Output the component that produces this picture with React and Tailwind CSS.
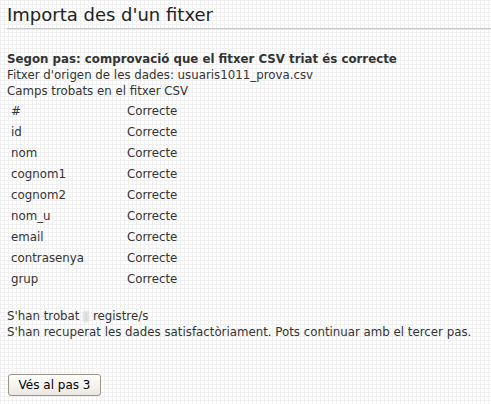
const rows = ["#", "id", "nom", "cognom1", "cognom2", "nom_u", "email", "contrasenya", "grup"];

export default function App() {
  return (
    <div className="min-h-screen w-[491px] h-[404px] overflow-hidden bg-white bg-[linear-gradient(to_right,#f0f0f0_1px,transparent_1px),linear-gradient(to_bottom,#f0f0f0_1px,transparent_1px)] bg-[size:4px_4px] font-['DejaVu_Sans',sans-serif] text-[11.8px] text-[#333]">
      <div className="pl-[7px]">
        <h1 className="pt-[3px] text-[18px] leading-[24px] text-[#222]">Importa des d'un fitxer</h1>
        <div className="mt-[1px] h-[2px] border-t border-[#c8c8c8] bg-[#e4e4e4]" />
        <div className="mt-[21px] leading-[16px]">
          <p className="font-bold">Segon pas: comprovació que el fitxer CSV triat és correcte</p>
          <p>Fitxer d'origen de les dades: usuaris1011_prova.csv</p>
          <p>Camps trobats en el fitxer CSV</p>
        </div>
        <table className="mt-[2px] border-separate border-spacing-0">
          <tbody>
            {rows.map((r) => (
              <tr key={r} className="h-[21px]">
                <td className="w-[120px] pl-[4px]">{r}</td>
                <td>Correcte</td>
              </tr>
            ))}
          </tbody>
        </table>
        <div className="mt-[18px] leading-[16px]">
          <p>
            S'han trobat <span className="inline-block h-[11px] w-[6px] align-middle bg-[#ddd] blur-[1px]" /> registre/s
          </p>
          <p>S'han recuperat les dades satisfactòriament. Pots continuar amb el tercer pas.</p>
        </div>
        <button className="mt-[34px] ml-[1px] h-[22px] w-[93px] rounded-[3px] border border-[#9c9484] bg-[linear-gradient(to_bottom,#fefefe,#ebe8e2)] text-[12px] text-black">
          Vés al pas 3
        </button>
      </div>
    </div>
  );
}
